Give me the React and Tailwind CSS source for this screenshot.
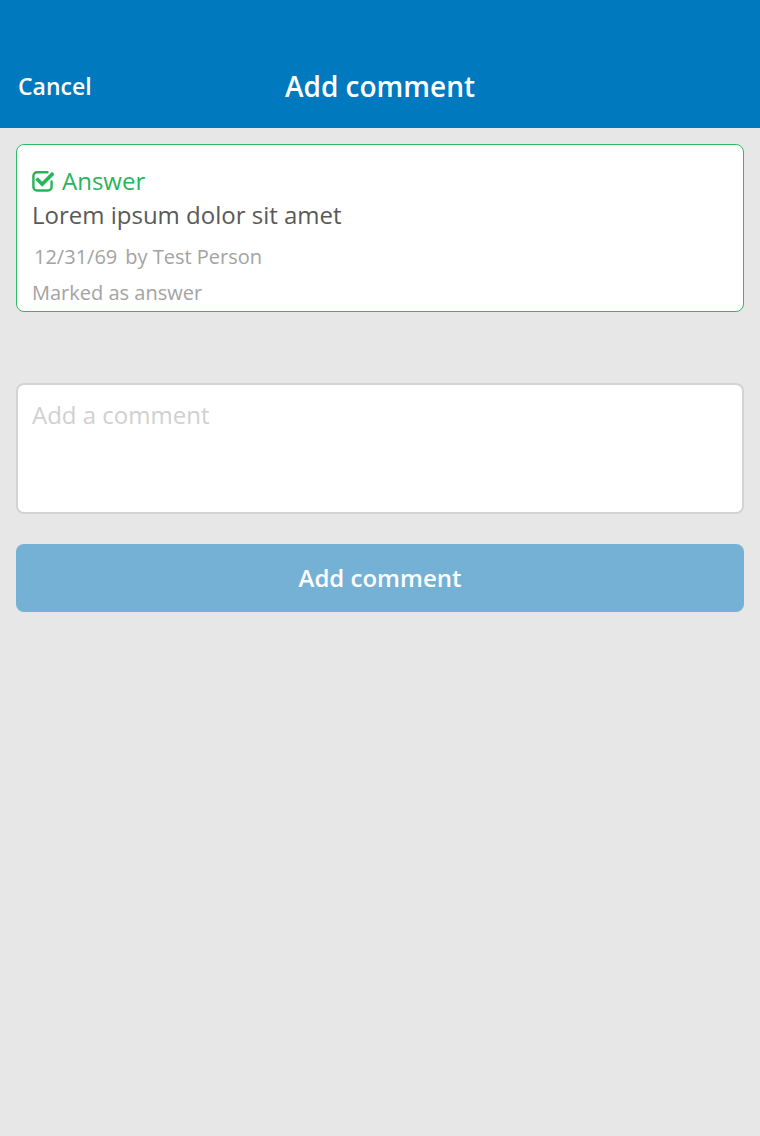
import React from "react";

function CheckSquareIcon() {
  return (
    <svg width="22" height="22" viewBox="0 0 22 22" fill="none">
      <path d="M15.5 2.3H5a3.6 3.6 0 0 0-3.6 3.6v11A3.6 3.6 0 0 0 5 20.5h11a3.6 3.6 0 0 0 3.6-3.6v-5.5" stroke="#27b559" strokeWidth="2.4" strokeLinecap="round" />
      <path d="M5.8 9.8l4.4 4.4 9.8-9.8" stroke="#27b559" strokeWidth="3.6" strokeLinecap="square" strokeLinejoin="miter" />
    </svg>
  );
}

export default function App() {
  return (
    <div className="min-h-[1136px] w-full bg-[#e7e7e7]" style={{ fontFamily: '"Open Sans", sans-serif' }}>
      <header className="h-[128px] bg-[#0079be] flex items-end pb-[22px] px-[18px] relative">
        <button className="text-white text-[23px] font-semibold leading-[40px]">Cancel</button>
        <h1 className="absolute left-0 right-0 bottom-[22px] text-center text-white text-[28px] font-semibold leading-[40px] pointer-events-none">Add comment</h1>
      </header>
      <main className="px-[16px] pt-[16px] flex flex-col">
        <div className="bg-white border border-[#2dbd5f] rounded-[8px] px-[15px] pt-[21px] pb-0">
          <div className="flex items-center gap-[8px] text-[#27b559] text-[24px] leading-[30px]">
            <CheckSquareIcon />
            <span>Answer</span>
          </div>
          <div className="text-[#595959] text-[24px] leading-[38px]">Lorem ipsum dolor sit amet</div>
          <div className="text-[#a3a3a3] text-[20px] leading-[36px] pl-[2px] flex gap-[8px] mt-[5px]">
            <span>12/31/69</span>
            <span>by Test Person</span>
          </div>
          <div className="text-[#a3a3a3] text-[20px] leading-[36px]">Marked as answer</div>
        </div>
        <textarea
          placeholder="Add a comment"
          className="mt-[71px] h-[131px] w-full bg-white border-2 border-[#d3d3d3] rounded-[8px] px-[14px] pt-[14px] pb-[10px] text-[24px] leading-[32px] text-[#555] placeholder:text-[#d0d0d0] resize-none outline-none"
        />
        <button className="mt-[30px] h-[68px] w-full rounded-[8px] bg-[#75b1d5] text-white text-[24px] font-semibold">Add comment</button>
      </main>
    </div>
  );
}
